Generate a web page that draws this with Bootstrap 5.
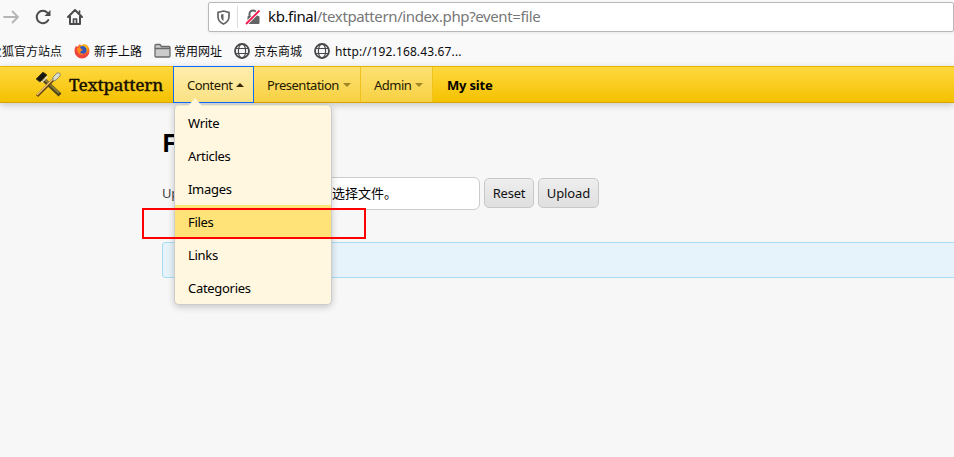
<!DOCTYPE html>
<html lang="en">
<head>
<meta charset="utf-8">
<title>Textpattern</title>
<link href="https://cdn.jsdelivr.net/npm/bootstrap@5.3.0/dist/css/bootstrap.min.css" rel="stylesheet">
<style>
body{font:13px/20px "Noto Sans","Noto Sans CJK SC",sans-serif;background:#f7f7f7;color:#000;height:457px;overflow:hidden}
svg{display:block;flex:none}
.chrome{height:66px;background:#f9f9fa;overflow:hidden}
.tools{height:34px;padding-left:2px}
.reload{margin-left:14px}
.home{margin-left:14px}
.address{margin-left:124px;width:760px;height:30px;border:1px solid #b8b8b8;border-radius:2px;background:#fff;font:15px/28px "Noto Sans",sans-serif;color:#777;padding-left:8px;box-shadow:0 1px 3px #0001}
.sep{width:1px;height:22px;background:#ddd;margin:0 7px 0 7px}
.url{margin-left:7px;letter-spacing:-.38px;margin-top:-2px}
.url b{font-weight:400;color:#0c0c0d}
.marks{height:32px;font-size:12px;line-height:20px;padding-top:2px;color:#0c0c0d}
.marks span{padding-top:1px}
.marks .cut{width:62px;direction:rtl;overflow:hidden}
.marks svg{margin:0 4px 0 12px}
.marks .folder{margin-right:3px}
.marks .host{margin-left:1px;letter-spacing:.13px}
.mast{height:37px;background:linear-gradient(#ffd83f,#f4c100);border-top:1px solid #e6b400;border-bottom:1px solid #d4a400;box-shadow:0 2px 7px #0003;position:relative;z-index:3;padding-left:35px}
.brand{width:138px;font:500 17px/35px "Noto Serif","Liberation Serif",serif;color:#1a1200}
.brand span{margin-left:7px;letter-spacing:-.25px;-webkit-text-stroke:.3px #1a1200}
.tab{height:35px;padding-left:13px;background:linear-gradient(#ffe173,#f7d143);border-right:1px solid #efc31b;color:#221a00}
.tab span{letter-spacing:-.5px}
.tab.open{height:37px;margin-top:-1px;width:81px;border:1px solid #0a6cff;background:linear-gradient(#ffeead,#fae184)}
.tab.wide{width:107px}
.tab.slim{width:72px}
.site{margin-left:14px;letter-spacing:-.2px}
.tri{width:0;height:0;border:4px solid transparent;border-top-color:#a08526;border-bottom:0;margin-left:4px}
.open .tri{border-top:0;border-bottom:4px solid #332a08}
.drop{position:absolute;left:174px;top:38px;width:158px;height:200px;background:#fff7df;border:1px solid #ccc;border-top-color:#f0e6c4;border-radius:5px;box-shadow:0 2px 7px #0003;padding-top:1px;letter-spacing:-.3px}
.drop:before{content:"";position:absolute;left:13px;top:-8px;border:7px solid transparent;border-top:0;border-bottom:8px solid #fff7df}
.drop div{height:33px;line-height:33px;padding-left:13px}
.drop .chosen{background:#ffe379;position:relative;top:-1px;line-height:35px}
.page{padding-left:162px;width:980px}
.page h1{font:bold 25px/30px "Noto Sans",sans-serif;margin:24px 0 20px}
.prompt{width:80px;line-height:33px;color:#444;letter-spacing:-.3px}
.file{width:238px;height:33px;border:1px solid #ccc;border-radius:6px;background:#fff;padding-left:89px;line-height:31px}
.act{height:30px;margin:1px 0 0 4px;border:1px solid #c8c8c8;border-radius:5px;background:linear-gradient(#eee,#dfdfdf);padding:0;font-size:13px;line-height:28px;color:#111;letter-spacing:-.2px;width:50px}
.act.send{width:61px;letter-spacing:-.1px}
.notice{height:36px;margin-top:32px;background:#e6f3fa;border:1px solid #a9dcf2;border-radius:3px}
.marker{position:absolute;left:142px;top:208px;width:224px;height:31px;border:2px solid red;z-index:5}
</style>
<script src="https://cdn.jsdelivr.net/npm/bootstrap@5.3.0/dist/js/bootstrap.bundle.min.js"></script>
</head>
<body>
<svg width="0" height="0" class="position-absolute"><defs>
<g id="globe" fill="none" stroke="#4b4b4d" stroke-width="1.200"><circle cx="8" cy="8" r="7" stroke-width="1.800"/><ellipse cx="8" cy="8" rx="3.600" ry="7"/><path d="M1.500 5.500h13M1.500 10.500h13"/></g>
</defs></svg>
<div class="chrome">
 <div class="tools d-flex align-items-center">
  <svg width="18" height="18" fill="none" stroke="#b5b5b6" stroke-width="1.800" stroke-linecap="round" stroke-linejoin="round"><path d="M2 9h14M10.500 3.500L16 9l-5.500 5.500"/></svg>
  <svg class="reload" width="18" height="18" fill="none" stroke="#4b4b4d" stroke-width="2" stroke-linecap="round"><path d="M14.300 12A6.200 6.200 0 1 1 13.500 4.800"/><path d="M16.500 2v6h-6z" fill="#4b4b4d" stroke="none"/></svg>
  <svg class="home" width="18" height="18" fill="none" stroke="#4b4b4d" stroke-width="2" stroke-linecap="round" stroke-linejoin="round"><path d="M2 9l7-7 7 7M4 8v8h10V8"/><path d="M7.500 16v-5h3v5M13.500 3v2" stroke-width="1.700"/></svg>
  <div class="address d-flex align-items-center">
   <svg width="13" height="15" fill="none" stroke="#646466" stroke-width="1.700"><path d="M6.500 1L12 2.300v4.200c0 3.500-2 6-5.500 7.500C3 12.500 1 10 1 6.500V2.300z"/><path d="M6.500 4v7C5 10 4 8.500 4 6.500V4.500z" fill="#646466" stroke="none"/></svg>
   <span class="sep"></span>
   <svg width="16" height="16"><path d="M4.500 7V5a3.500 3.500 0 0 1 7 0v2" fill="none" stroke="#646466" stroke-width="2"/><rect x="2.500" y="7" width="12" height="8" rx="1" fill="#646466"/><path d="M1 15L14.500 1.500" stroke="#fff" stroke-width="3.500"/><path d="M1 15L14.500 1.500" stroke="#f5174d" stroke-width="1.800"/></svg>
   <span class="url"><b>kb.final</b>/textpattern/index.php?event=file</span>
  </div>
 </div>
 <div class="marks d-flex align-items-center text-nowrap">
  <span class="cut">火狐官方站点</span>
  <svg width="16" height="16"><defs><radialGradient id="fx" cx=".65" cy=".25"><stop stop-color="#ffe226"/><stop offset=".5" stop-color="#ff980e"/><stop offset="1" stop-color="#f0453f"/></radialGradient></defs><path d="M2 3l1 1 3-3 1 1.500 3-1.500c4 1 5.500 4 5.500 7a7.500 7.500 0 0 1-15 0c0-2 .500-4 1.500-5z" fill="url(#fx)"/><path d="M6 4c2-2 5-1 6 1 1.500 3 0 6-4 6-2 0-4-1-4-3l3-1z" fill="#3157bd"/><path d="M3 5l3 0 3 2-2 1-1 2 4 1c-4 2-7-1-7-6z" fill="#ff8a19"/></svg>
  <span>新手上路</span>
  <svg class="folder" width="17" height="16"><path d="M1 2.500q0-1 1-1h4l1.500 2H15q1 0 1 1V13q0 1-1 1H2q-1 0-1-1zM1 5.500h15" fill="#cbcbcc" stroke="#6b6b6c" stroke-width="1.300"/></svg>
  <span>常用网址</span>
  <svg width="16" height="16"><use href="#globe"/></svg>
  <span>京东商城</span>
  <svg width="16" height="16"><use href="#globe"/></svg>
  <span class="host">http://192.168.43.67...</span>
 </div>
</div>
<header class="mast d-flex">
 <div class="brand d-flex align-items-center">
  <svg width="27" height="27"><path d="M8 8l17 16" stroke="#4c421c" stroke-width="4.200"/><path d="M8 7l16 15" stroke="#8a7b36" stroke-width="2"/><path d="M1 8L8 1l4 3-7 7z" fill="#171711" stroke="#5b4b16"/><path d="M6 11l6-6 1 1-6 6z" fill="#ded9c0"/><path d="M2 25L20 7" stroke="#63410c" stroke-width="3"/><path d="M2 24L19 7" stroke="#f0c375" stroke-width="1.500"/><path d="M18 6l4-4q4-1 3 3l-4 4-3 1z" fill="#d8dccf" stroke="#8f8a65"/></svg>
  <span>Textpattern</span>
 </div>
 <div class="tab open d-flex align-items-center"><span>Content</span><i class="tri"></i></div>
 <div class="tab wide d-flex align-items-center"><span>Presentation</span><i class="tri"></i></div>
 <div class="tab slim d-flex align-items-center"><span>Admin</span><i class="tri"></i></div>
 <b class="site d-flex align-items-center">My site</b>
 <div class="drop"><div>Write</div><div>Articles</div><div>Images</div><div class="chosen">Files</div><div>Links</div><div>Categories</div></div>
</header>
<main class="page">
 <h1>Files</h1>
 <div class="d-flex">
  <span class="prompt">Upload</span>
  <div class="file text-nowrap">选择文件。</div>
  <button class="act">Reset</button>
  <button class="act send">Upload</button>
 </div>
 <div class="notice"></div>
</main>
<div class="marker"></div>
</body>
</html>
